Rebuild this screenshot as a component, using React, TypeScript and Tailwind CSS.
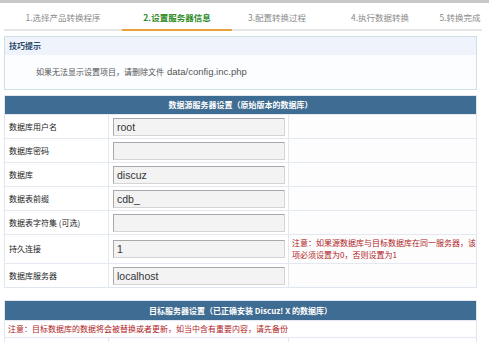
import React from 'react'

const steps = [
  { label: '1.选择产品转换程序', w: 'w-[118px]' },
  { label: '2.设置服务器信息', w: 'w-[110px]' },
  { label: '3.配置转换过程', w: 'w-[90px]' },
  { label: '4.执行数据转换', w: 'w-[116px]' },
  { label: '5.转换完成', w: 'flex-1' },
]

const sourceRows: { label: string; value: string; note?: string }[] = [
  { label: '数据库用户名', value: 'root' },
  { label: '数据库密码', value: '' },
  { label: '数据库', value: 'discuz' },
  { label: '数据表前缀', value: 'cdb_' },
  { label: '数据表字符集 (可选)', value: '' },
  {
    label: '持久连接',
    value: '1',
    note: '注意：如果源数据库与目标数据库在同一服务器，该项必须设置为0，否则设置为1',
  },
  { label: '数据库服务器', value: 'localhost' },
]

function Field({ value }: { value: string }) {
  return (
    <div className="h-[18px] w-[172px] border border-[#a9a9a9] border-b-[#d4d4d4] border-r-[#d4d4d4] bg-[#f3f3f3] px-[3px] text-[10.5px] leading-[16px] text-[#333] font-['Liberation_Sans',sans-serif]">
      {value}
    </div>
  )
}

export default function App() {
  return (
    <div className="h-[342px] w-[489px] overflow-hidden bg-white font-['Noto_Sans_CJK_SC',sans-serif] text-[8px] text-[#333]">
      <div className="h-[3px] bg-[#c8c8c8]" />

      {/* Steps */}
      <div className="mx-[4px] mt-[8px] flex w-[478px] border-b-2 border-[#e6e6e6]">
        {steps.map((s, i) => (
          <div
            key={s.label}
            className={`-mb-[2px] flex h-[20px] items-start justify-center whitespace-nowrap text-[8.5px] ${s.w} ${
              i === 1
                ? 'border-b-2 border-[#e8a23a] font-bold text-[#2e8b1f]'
                : 'text-[#8a8a8a]'
            }`}
          >
            {s.label}
          </div>
        ))}
      </div>

      {/* Tip */}
      <div className="mx-[4px] mt-[5px] w-[473px] border border-[#cfdfe8] bg-[#fbfdff]">
        <div className="h-[18px] bg-[#eef3fc] pl-[4px] text-[8px] font-bold leading-[18px] text-[#2c4a6a]">
          技巧提示
        </div>
        <div className="flex h-[34px] items-center pl-[31px] text-[8px] text-[#555]">
          如果无法显示设置项目，请删除文件
          <span className="ml-[3px] font-['Liberation_Sans',sans-serif] text-[9.5px]">
            data/config.inc.php
          </span>
        </div>
      </div>

      {/* Source server */}
      <div className="mx-[4px] mt-[5px] w-[473px] border border-[#dfe6ee]">
        <div className="h-[18px] bg-[#3f6c92] text-center text-[8px] font-bold leading-[18px] text-white">
          数据源服务器设置（原始版本的数据库）
        </div>
        {sourceRows.map((r) => (
          <div
            key={r.label}
            className={`flex border-t border-[#e3e8f1] ${r.note ? 'h-[29px]' : 'h-[24px]'}`}
          >
            <div className="flex w-[104px] items-center border-r border-[#e3e8f1] pl-[4px] text-[8px] text-[#222]">
              {r.label}
            </div>
            <div className="flex w-[180px] items-center border-r border-[#e3e8f1] pl-[4px]">
              <Field value={r.value} />
            </div>
            <div className="flex flex-1 items-center bg-[#fdfdfd] pl-[3px] text-[8px] leading-[12px] text-[#b0231e]">
              {r.note}
            </div>
          </div>
        ))}
      </div>

      {/* Target server */}
      <div className="mx-[4px] mt-[12px] w-[473px] border border-[#dfe6ee]">
        <div className="h-[19px] bg-[#3f6c92] text-center text-[8px] font-bold leading-[19px] text-white">
          目标服务器设置（已正确安装 Discuz! X 的数据库）
        </div>
        <div className="h-[17px] border-t border-[#e3e8f1] pl-[3px] text-[8px] leading-[16px] text-[#b0231e]">
          注意：目标数据库的数据将会被替换或者更新，如当中含有重要内容，请先备份
        </div>
        <div className="flex h-[24px] border-t border-[#e3e8f1]">
          <div className="w-[104px] border-r border-[#e3e8f1]" />
          <div className="flex w-[180px] items-start border-r border-[#e3e8f1] pl-[4px] pt-[4px]">
            <Field value="" />
          </div>
          <div className="flex-1" />
        </div>
      </div>
    </div>
  )
}
